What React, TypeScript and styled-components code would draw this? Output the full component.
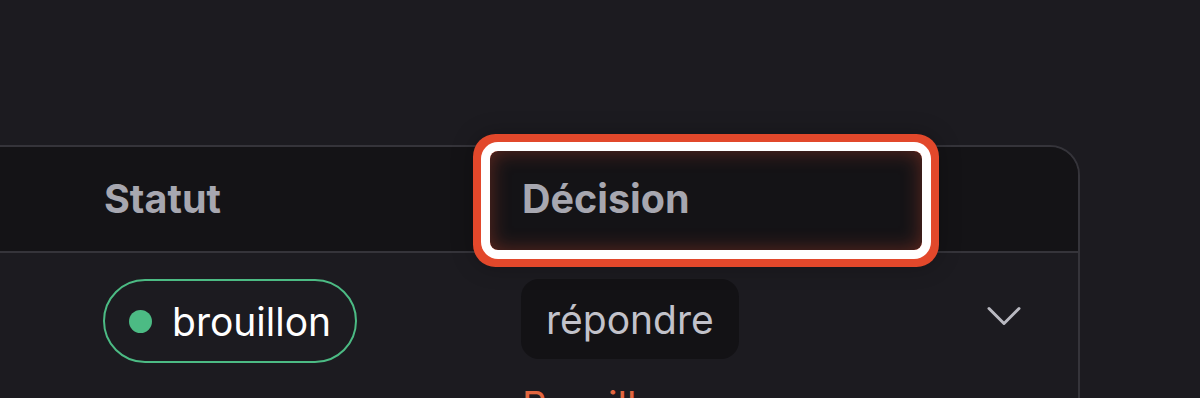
import React from 'react';
import styled, { createGlobalStyle } from 'styled-components';
import { ChevronDown } from 'lucide-react';

const GlobalStyle = createGlobalStyle`
  html, body {
    margin: 0;
    padding: 0;
    background: #1c1b20;
    font-family: Inter, "Noto Sans", sans-serif;
    overflow: hidden;
  }
`;

/**
 * Page wrapper, leaves the empty band above the table.
 */
const Page = styled.div`
  width: 1200px;
  height: 398px;
  padding-top: 145px;
  box-sizing: border-box;
  overflow: hidden;
`;

/**
 * Table card, its left edge runs off the screen.
 */
const Card = styled.div`
  margin-left: -40px;
  width: 1120px;
  box-sizing: border-box;
  border: 2px solid #35343a;
  border-radius: 30px;
`;

interface RowProps {
  header?: boolean;
}

const Row = styled.div<RowProps>`
  display: grid;
  grid-template-columns: 110px 418px 1fr;
  background: ${props => (props.header ? '#141316' : 'transparent')};
  border-bottom: ${props => (props.header ? '2px solid #35343a' : 'none')};
  border-radius: ${props => (props.header ? '28px 28px 0 0' : '0')};
  height: ${props => (props.header ? '104px' : 'auto')};
`;

const HeadCell = styled.div`
  position: relative;
  display: flex;
  align-items: center;
  padding-left: 32px;
  font-size: 39.5px;
  font-weight: 700;
  color: #a7a7b0;
`;

/**
 * Annotation ring drawn over the highlighted header.
 */
const Highlight = styled.div`
  position: absolute;
  left: 0;
  top: 4px;
  width: 432px;
  height: 99px;
  border-radius: 8px;
  pointer-events: none;
  box-shadow: inset 0 0 20px rgba(214, 72, 44, 0.4), 0 0 0 9px #ffffff,
    0 0 0 17px #e2482b, 0 0 22px 17px rgba(0, 0, 0, 0.25);
`;

const Cell = styled.div`
  padding: 26px 0 0 32px;
  display: flex;
  flex-direction: column;
  align-items: flex-start;
`;

const DecisionTop = styled.div`
  display: flex;
  align-items: center;
  justify-content: space-between;
  align-self: stretch;
  padding-right: 44px;
`;

const StatusPill = styled.div`
  display: inline-flex;
  align-items: center;
  gap: 20px;
  height: 84px;
  box-sizing: border-box;
  padding: 0 24px 0 24px;
  border: 2px solid #4cbb84;
  border-radius: 42px;
  color: #ffffff;
  font-size: 39px;
  margin-left: -1px;
`;

const Dot = styled.span`
  width: 23px;
  height: 23px;
  border-radius: 50%;
  background: #4cbb84;
`;

const ActionChip = styled.div`
  display: inline-flex;
  align-items: center;
  height: 80px;
  padding: 0 25px;
  box-sizing: border-box;
  background: #131215;
  border-radius: 18px;
  color: #c2c2ca;
  font-size: 39px;
  margin-left: -1px;
`;

const Chevron = styled(ChevronDown)`
  color: #b9b9c1;
  margin-top: -6px;
`;

const DraftNote = styled.div`
  margin-top: 24px;
  color: #e2663f;
  font-size: 39px;
  line-height: 1.2;
`;

const App: React.FC = () => {
  return (
    <Page>
      <GlobalStyle />
      <Card>
        <Row header>
          <HeadCell />
          <HeadCell>Statut</HeadCell>
          <HeadCell>
            Décision
            <Highlight />
          </HeadCell>
        </Row>
        <Row>
          <Cell />
          <Cell>
            <StatusPill>
              <Dot />
              brouillon
            </StatusPill>
          </Cell>
          <Cell>
            <DecisionTop>
              <ActionChip>répondre</ActionChip>
              <Chevron size={60} strokeWidth={1.2} />
            </DecisionTop>
            <DraftNote>Brouillon</DraftNote>
          </Cell>
        </Row>
      </Card>
    </Page>
  );
};

export default App;
